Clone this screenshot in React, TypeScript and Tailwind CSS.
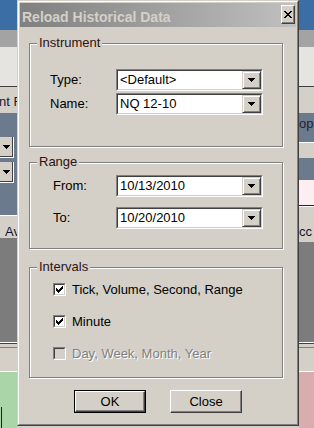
import type { ReactNode } from "react";

const Arrow = () => (
  <svg width="7" height="4" viewBox="0 0 7 4" shapeRendering="crispEdges">
    <path d="M0 0H7V1H6V2H5V3H4V4H3V3H2V2H1V1H0Z" fill="#000" />
  </svg>
);

const CheckMark = () => (
  <svg width="7" height="7" viewBox="0 0 7 7" shapeRendering="crispEdges">
    <path
      d="M6 0h1v1h-1z M5 1h2v1h-2z M0 2h1v1h-1z M4 2h3v1h-3z M0 3h2v1h-2z M3 3h3v1h-3z M0 4h5v1h-5z M1 5h3v1h-3z M2 6h1v1h-1z"
      fill="#000"
    />
  </svg>
);

const CloseGlyph = () => (
  <svg width="8" height="7" viewBox="0 0 8 7" shapeRendering="crispEdges">
    <path
      d="M0 0h2v1h-2z M6 0h2v1h-2z M1 1h2v1h-2z M5 1h2v1h-2z M2 2h4v1h-4z M3 3h2v1h-2z M2 4h4v1h-4z M1 5h2v1h-2z M5 5h2v1h-2z M0 6h2v1h-2z M6 6h2v1h-2z"
      fill="#000"
    />
  </svg>
);

const DropButton = () => (
  <div className="flex h-full w-[19px] items-center justify-center border border-t-[#d4d0c8] border-l-[#d4d0c8] border-r-[#404040] border-b-[#404040] bg-[#d4d0c8] shadow-[inset_1px_1px_0_#fff,inset_-1px_-1px_0_#808080]">
    <Arrow />
  </div>
);

const Combo = ({ value }: { value: string }) => (
  <div className="flex h-[22px] w-[147px] border border-t-[#808080] border-l-[#808080] border-r-white border-b-white">
    <div className="flex flex-1 border border-t-[#404040] border-l-[#404040] border-r-[#d4d0c8] border-b-[#d4d0c8] bg-white">
      <span className="flex-1 whitespace-nowrap pl-[2px] leading-[18px]">{value}</span>
      <DropButton />
    </div>
  </div>
);

const FieldRow = ({ label, value, labelWidth }: { label: string; value: string; labelWidth: string }) => (
  <div className="flex items-center">
    <span className={labelWidth}>{label}</span>
    <Combo value={value} />
  </div>
);

const CheckRow = ({ label, checked, disabled }: { label: string; checked?: boolean; disabled?: boolean }) => (
  <div className="flex h-[13px] items-center gap-[6px]">
    <div className="h-[13px] w-[13px] border border-t-[#808080] border-l-[#808080] border-r-white border-b-white">
      <div
        className={`flex h-full w-full items-center justify-center border border-t-[#404040] border-l-[#404040] border-r-[#d4d0c8] border-b-[#d4d0c8] ${
          disabled ? "bg-[#d4d0c8]" : "bg-white"
        }`}
      >
        {checked && <CheckMark />}
      </div>
    </div>
    <span
      className={`whitespace-nowrap ${disabled ? "text-[#808080] [text-shadow:1px_1px_0_#fff]" : "text-black"}`}
    >
      {label}
    </span>
  </div>
);

const Group = ({ title, className, children }: { title: string; className: string; children: ReactNode }) => (
  <fieldset
    className={`ml-[9px] w-[254px] border border-[#808080] shadow-[inset_1px_1px_0_#fff,1px_1px_0_#fff] ${className}`}
  >
    <legend className="ml-[7px] bg-[#d4d0c8] px-[2px] leading-[16px] text-[#301010]">{title}</legend>
    {children}
  </fieldset>
);

const Button = ({ label, isDefault }: { label: string; isDefault?: boolean }) => (
  <div className={`h-[23px] w-[72px] ${isDefault ? "border border-black" : ""}`}>
    <button
      type="button"
      className="h-full w-full border border-t-white border-l-white border-r-[#404040] border-b-[#404040] bg-[#d4d0c8] leading-[16px] text-black shadow-[inset_-1px_-1px_0_#808080]"
    >
      {label}
    </button>
  </div>
);

const ClippedDrop = () => (
  <div className="h-[21px] w-[14px] border-r border-b border-r-white border-b-white">
    <div className="flex h-full w-full items-center justify-center border-r border-b border-r-[#404040] border-b-[#404040] bg-[#d4d0c8] pl-[1px]">
      <Arrow />
    </div>
  </div>
);

const LeftStrip = () => (
  <div className="flex w-[17px] flex-col overflow-hidden">
    <div className="h-[30px] bg-[#3a6ea5]" />
    <div className="h-[17px] bg-[#a3a3a3]" />
    <div className="h-[39px] bg-[#e6e4e0]" />
    <div className="h-px bg-[#404040]" />
    <div className="h-[26px] whitespace-nowrap bg-[#d4d0c8] pt-[7px] text-[#101830]">
      <span className="-ml-[1px]">nt F</span>
    </div>
    <div className="flex h-[102px] flex-col gap-[4px] bg-[#6b7a8c] pt-[24px]">
      <ClippedDrop />
      <ClippedDrop />
    </div>
    <div className="h-px bg-white" />
    <div className="h-[22px] whitespace-nowrap bg-[#d4d0c8] pl-[5px] pt-[8px] text-[#101830]">Av</div>
    <div className="h-[104px] bg-[#7c7c7c]" />
    <div className="h-px bg-white" />
    <div className="h-px bg-[#404040]" />
    <div className="h-[3px] bg-[#d4d0c8]" />
    <div className="h-px bg-[#808080]" />
    <div className="h-[23px] bg-[#d4d0c8]" />
    <div className="h-px bg-white" />
    <div className="flex-1 bg-[#a9d5a9] pt-[35px]">
      <div className="ml-[1px] h-[21px] w-px bg-[#0000ff]" />
    </div>
  </div>
);

const RightStrip = () => (
  <div className="flex w-[15px] flex-col overflow-hidden">
    <div className="h-[30px] bg-[#3a6ea5]" />
    <div className="h-[17px] bg-[#a3a3a3]" />
    <div className="h-[39px] bg-[#e6e4e0]" />
    <div className="h-px bg-[#404040]" />
    <div className="h-[26px] bg-[#d4d0c8]" />
    <div className="h-[29px] whitespace-nowrap bg-[#6b7a8c] pt-[3px] text-[#1a2535]">op</div>
    <div className="h-px bg-white" />
    <div className="h-[15px] bg-[#d4d0c8]" />
    <div className="h-[22px] bg-[#6b7a8c]" />
    <div className="h-[25px] bg-[#fdeef2]" />
    <div className="h-px bg-[#6a0018]" />
    <div className="h-px bg-white" />
    <div className="h-[35px] whitespace-nowrap bg-[#d4d0c8] pt-[17px] text-[#101830]">cc</div>
    <div className="h-[100px] bg-[#7c7c7c]" />
    <div className="h-px bg-white" />
    <div className="h-px bg-[#404040]" />
    <div className="h-[3px] bg-[#d4d0c8]" />
    <div className="h-px bg-[#808080]" />
    <div className="h-[23px] bg-[#d4d0c8]" />
    <div className="h-px bg-white" />
    <div className="flex-1 bg-[#d9adad]" />
  </div>
);

export default function App() {
  return (
    <div className="relative h-[428px] w-[314px] overflow-hidden font-['Liberation_Sans',Arial,sans-serif] text-[13px] leading-[16px] text-black">
      <div className="flex h-full">
        <LeftStrip />
        <div className="flex-1 bg-[#d4d0c8]" />
        <RightStrip />
      </div>

      {/* dialog */}
      <div className="absolute left-[17px] top-0 h-[426px] w-[282px] border border-t-[#d4d0c8] border-l-[#d4d0c8] border-r-[#404040] border-b-[#404040] bg-[#d4d0c8]">
        <div className="flex h-full flex-col border border-t-white border-l-white border-r-[#808080] border-b-[#808080] p-px">
          <div className="flex h-[24px] items-start justify-between bg-gradient-to-r from-[#808080] to-[#c0c0c0]">
            <span className="mt-[6px] pl-[2px] text-[14px] font-bold leading-[16px] text-[#d4d0c8]">
              Reload Historical Data
            </span>
            <div className="mr-[1px] mt-[2px] flex h-[19px] w-[14px] items-center justify-center border border-t-white border-l-white border-r-[#404040] border-b-[#404040] bg-[#d4d0c8] shadow-[inset_-1px_-1px_0_#808080]">
              <CloseGlyph />
            </div>
          </div>

          <div className="flex flex-1 flex-col">
            <Group title="Instrument" className="mt-[8px]">
              <div className="flex flex-col gap-[2px] pb-[31px] pl-[20px] pt-[18px]">
                <FieldRow label="Type:" value="<Default>" labelWidth="w-[66px]" />
                <FieldRow label="Name:" value="NQ 12-10" labelWidth="w-[66px]" />
              </div>
            </Group>

            <Group title="Range" className="mt-[7px]">
              <div className="flex flex-col gap-[10px] pb-[19px] pl-[23px] pt-[5px]">
                <FieldRow label="From:" value="10/13/2010" labelWidth="w-[63px]" />
                <FieldRow label="To:" value="10/20/2010" labelWidth="w-[63px]" />
              </div>
            </Group>

            <Group title="Intervals" className="mt-[10px]">
              <div className="flex flex-col gap-[19px] pb-[17px] pl-[23px] pt-[8px]">
                <CheckRow label="Tick, Volume, Second, Range" checked />
                <CheckRow label="Minute" checked />
                <CheckRow label="Day, Week, Month, Year" disabled />
              </div>
            </Group>

            <div className="mt-[12px] flex justify-center gap-[24px]">
              <Button label="OK" isDefault />
              <Button label="Close" />
            </div>
          </div>
        </div>
      </div>
    </div>
  );
}
